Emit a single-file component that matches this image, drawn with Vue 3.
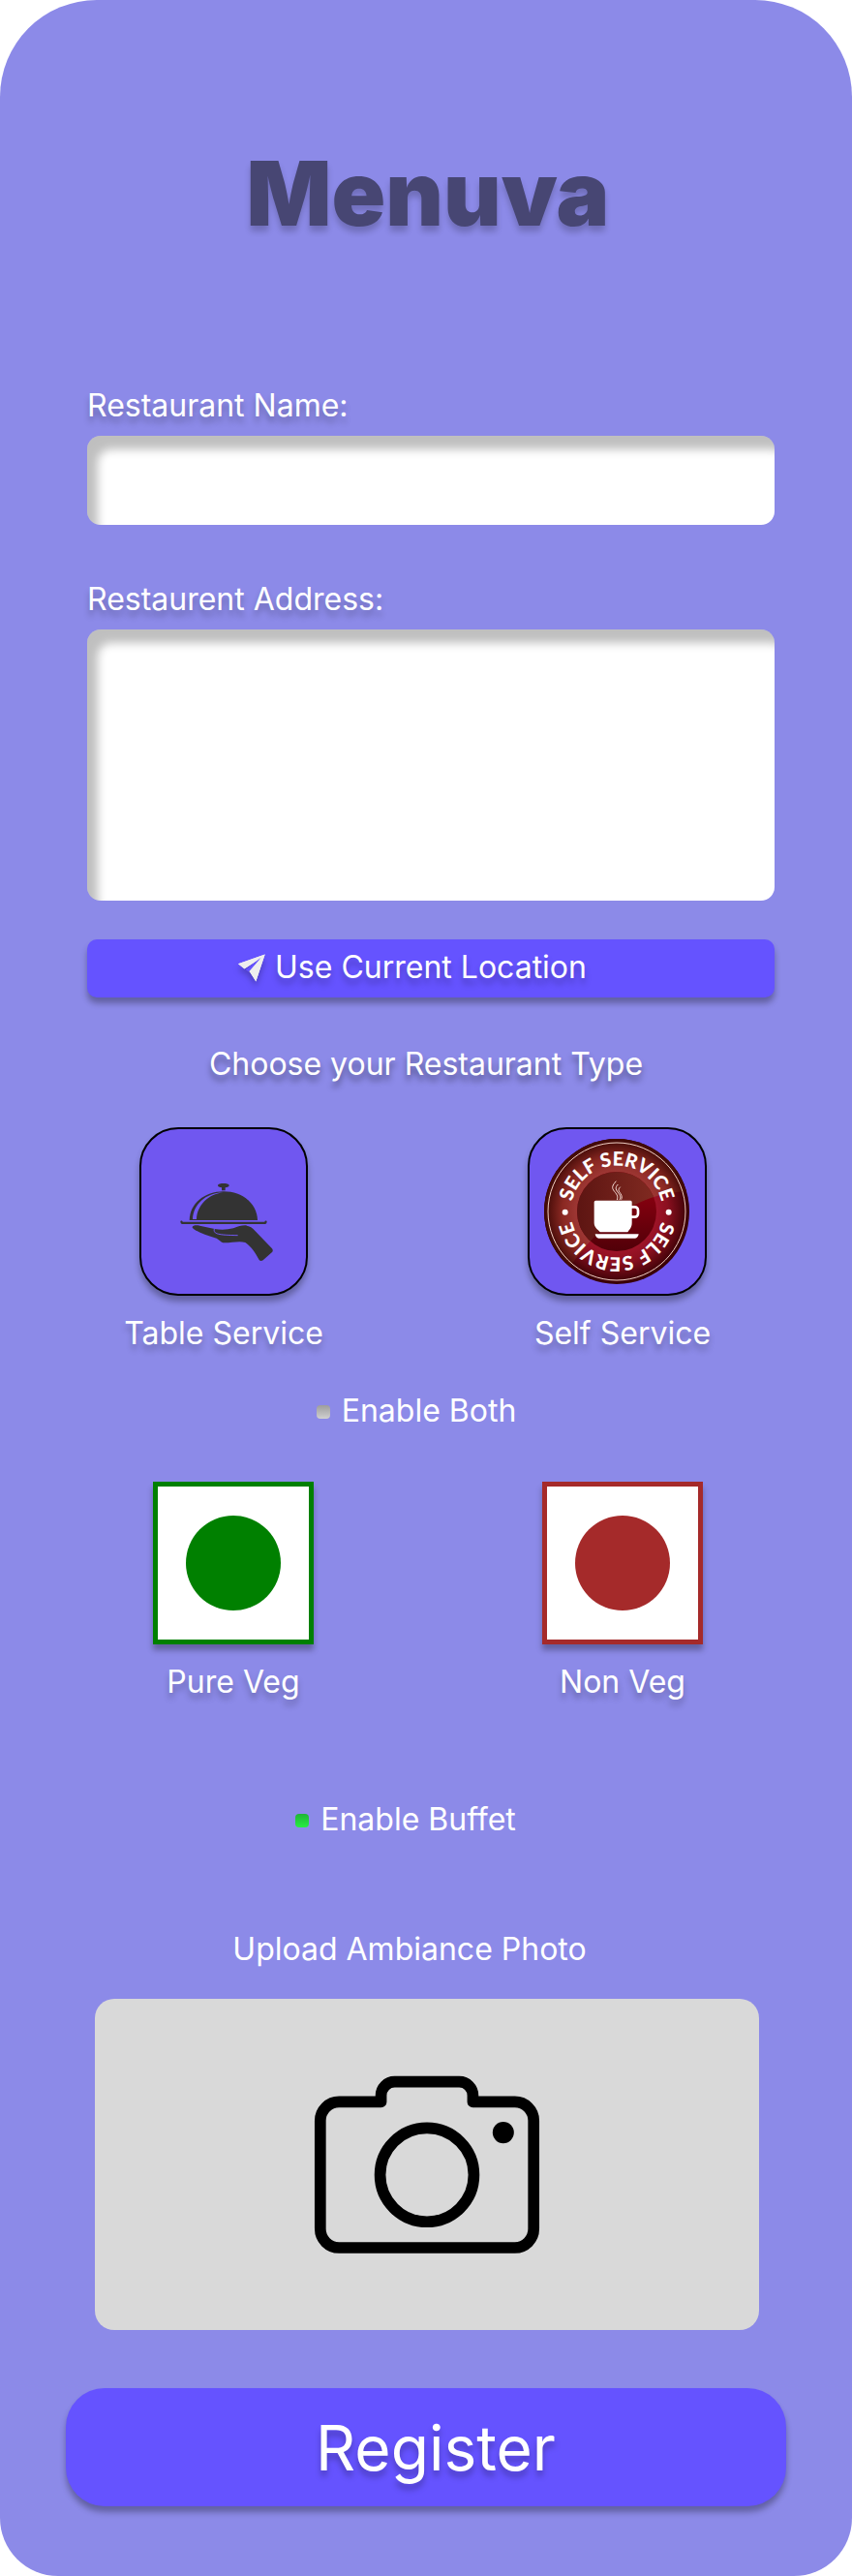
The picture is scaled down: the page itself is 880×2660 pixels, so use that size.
<script setup>
import { ref } from 'vue'

const restaurantName = ref('')
const address = ref('')
const serviceType = ref('')
const foodType = ref('')
const enableBoth = ref(false)
const enableBuffet = ref(true)
</script>

<template>
  <main class="panel">
    <h1 class="brand">Menuva</h1>

    <form class="form" @submit.prevent>
      <div class="field">
        <label class="text shade" for="name">Restaurant Name:</label>
        <input id="name" v-model="restaurantName" class="box" type="text" />
      </div>

      <div class="field">
        <label class="text shade" for="address">Restaurent Address:</label>
        <textarea id="address" v-model="address" class="box box-tall"></textarea>
      </div>

      <button class="locate text" type="button">
        <svg class="plane" viewBox="30 38 84 86" aria-hidden="true">
          <path d="M113 39 30 68 49 84 97 53 65 91 85 123Z" fill="#eee" />
          <path d="M50 83 99 51 62 91 66 94 85 123 113 39 30 68Z" fill="#eee" />
          <path d="M101 49 53 86 63 93Z" fill="#6553ff" />
        </svg>
        <span class="shade">Use Current Location</span>
      </button>

      <h2 class="text heading">Choose your Restaurant Type</h2>

      <div class="choices services">
        <button class="choice" type="button" :aria-pressed="serviceType === 'table'" @click="serviceType = 'table'">
          <span class="tile">
            <svg class="tray" viewBox="78 78 510 510" aria-hidden="true">
              <g fill="#333">
                <path d="M315 252c1-8 34-8 35 0 0 4-5 6-12 7v9h-11v-9c-7-1-12-3-12-7Z" />
                <path d="M227 360c1-51 46-89 106-89 59 0 104 38 105 89Z" />
                <path d="M199 364c0-3 6-3 7 1h254c1-4 7-4 7-1 0 5-2 8-6 8H205c-4 0-6-3-6-8Z" />
                <path d="M236 381c1-5 12-6 23-4l46 10c18 3 38 3 58-2 15-5 24-9 37-9 13 1 22 7 31 18l52 54c3 4 3 8 0 11l-28 25c-4 3-9 3-12-1-14-26-26-42-43-54-20-6-44 2-69 1-7-3-12-10-20-14-26-7-51-16-68-27-5-3-8-5-7-8Z" />
              </g>
              <path d="M237 357c2-45 39-81 94-83-45 6-80 39-82 83Z" fill="#7057f0" />
              <path d="M304 387c-4 16 13 19 73 20" fill="none" stroke="#7057f0" stroke-width="3" />
            </svg>
          </span>
          <span class="text shade">Table Service</span>
        </button>

        <button class="choice" type="button" :aria-pressed="serviceType === 'self'" @click="serviceType = 'self'">
          <span class="tile tile-wide">
            <svg class="badge" viewBox="0 0 450 450" aria-hidden="true">
              <defs>
                <radialGradient id="ring">
                  <stop offset="0.5" stop-color="#a3142a" />
                  <stop offset="0.7" stop-color="#8c1020" />
                  <stop offset="1" stop-color="#350004" />
                </radialGradient>
                <radialGradient id="ringGloss">
                  <stop offset="0.5" stop-color="#a23a38" />
                  <stop offset="0.75" stop-color="#8a2822" />
                  <stop offset="1" stop-color="#3c0805" />
                </radialGradient>
                <linearGradient id="disc" x1="0" y1="0" x2="0" y2="1">
                  <stop offset="0.3" stop-color="#86000f" />
                  <stop offset="1" stop-color="#510008" />
                </linearGradient>
                <linearGradient id="discGloss" x1="0" y1="0" x2="1" y2="0">
                  <stop offset="0" stop-color="#5d1512" />
                  <stop offset="1" stop-color="#812a21" />
                </linearGradient>
                <clipPath id="gloss">
                  <path d="M0 0H450V163C330 164 205 215 70 410L0 450Z" />
                </clipPath>
                <path id="orbit" d="M83 225A142 142 0 0 1 367 225A142 142 0 0 1 83 225" />
              </defs>
              <circle cx="225" cy="225" r="225" fill="url(#ring)" />
              <circle cx="225" cy="225" r="225" fill="url(#ringGloss)" clip-path="url(#gloss)" />
              <circle cx="225" cy="225" r="213" fill="none" stroke="#f0cfc4" stroke-width="3" />
              <circle cx="225" cy="225" r="123" fill="url(#disc)" />
              <circle cx="225" cy="225" r="123" fill="url(#discGloss)" clip-path="url(#gloss)" />
              <g class="orbit-text" fill="#fff" text-anchor="middle">
                <text><textPath href="#orbit" startOffset="25%">SELF SERVICE</textPath></text>
                <text><textPath href="#orbit" startOffset="75%">SELF SERVICE</textPath></text>
              </g>
              <g fill="#fff">
                <circle cx="65" cy="227" r="9" />
                <circle cx="386" cy="227" r="9" />
                <path d="M160 191H268Q272 191 272 196V260C272 276 263 281 259 289H173C169 281 155 276 155 260V196Q155 191 160 191Z" />
                <path d="M158 295H293Q291 307 282 308H169Q160 307 158 295Z" />
              </g>
              <rect x="262" y="211" width="29" height="31" rx="10" fill="none" stroke="#fff" stroke-width="8" />
              <path d="M223 131c-12 14-15 20-5 32s11 16 8 26M229 141c-12 12-5 18 2 28s6 15 2 20M236 149c-9 9-4 13 1 21s4 12 2 18" fill="none" stroke="#f5dcd5" stroke-width="3" />
            </svg>
          </span>
          <span class="text shade">Self Service</span>
        </button>
      </div>

      <label class="check check-both text">
        <input v-model="enableBoth" type="checkbox" />
        Enable Both
      </label>

      <div class="choices foods">
        <button class="choice" type="button" :aria-pressed="foodType === 'veg'" @click="foodType = 'veg'">
          <span class="mark veg"><span class="dot"></span></span>
          <span class="text shade">Pure Veg</span>
        </button>
        <button class="choice" type="button" :aria-pressed="foodType === 'nonveg'" @click="foodType = 'nonveg'">
          <span class="mark nonveg"><span class="dot"></span></span>
          <span class="text shade">Non Veg</span>
        </button>
      </div>

      <label class="check check-buffet text">
        <input v-model="enableBuffet" type="checkbox" />
        Enable Buffet
      </label>

      <label class="text upload-label" for="photo">Upload Ambiance Photo</label>
      <div class="upload">
        <svg class="camera" viewBox="40 38 700 554" aria-hidden="true">
          <g fill="none" stroke="#000" stroke-width="35" stroke-linejoin="round">
            <path d="M118 120H248V100A42 42 0 0 1 290 58H490A42 42 0 0 1 532 100V120H662A58 58 0 0 1 720 178V513A58 58 0 0 1 662 571H118A58 58 0 0 1 60 513V178A58 58 0 0 1 118 120Z" />
            <circle cx="390" cy="346" r="145" />
          </g>
          <circle cx="626" cy="215" r="33" />
        </svg>
        <input id="photo" class="file" type="file" accept="image/*" />
      </div>

      <button class="register" type="submit">Register</button>
    </form>
  </main>
</template>

<style>
body {
  margin: 0;
  background: #fff;
}
</style>

<style scoped>
.panel {
  box-sizing: border-box;
  padding: 144px 0 72px;
  border-radius: 100px 100px 60px 60px;
  background: #8c8ae8;
  font-family: Inter, "Liberation Sans", sans-serif;
  color: #fff;
}

.brand {
  margin: 0 0 142px;
  padding-left: 4px;
  text-align: center;
  font-size: 92px;
  line-height: 112px;
  font-weight: 900;
  color: #474673;
  text-shadow: 0 6px 6px rgba(0, 0, 0, 0.2);
}

.form {
  display: flex;
  flex-direction: column;
}

.text {
  font-size: 32px;
  line-height: 42px;
  font-weight: 400;
}

.shade {
  text-shadow: 0 6px 6px rgba(0, 0, 0, 0.25);
}

button {
  margin: 0;
  padding: 0;
  border: 0;
  background: none;
  color: inherit;
  font-family: inherit;
  cursor: pointer;
}

.field {
  display: flex;
  flex-direction: column;
  gap: 10px;
  margin: 0 80px 56px 90px;
}

.field + .locate {
  margin-top: -16px;
}

.box {
  box-sizing: border-box;
  width: 100%;
  height: 92px;
  padding: 20px 24px;
  border: 0;
  border-radius: 14px;
  background: #fff;
  box-shadow: inset 11px 14px 10px rgba(0, 0, 0, 0.25);
  font: 400 32px/42px Inter, sans-serif;
  color: #333;
}

.box-tall {
  height: 280px;
  resize: none;
}

.locate {
  display: flex;
  align-items: center;
  justify-content: center;
  gap: 10px;
  height: 60px;
  margin: 0 80px 0 90px;
  padding: 0 38px 2px 0;
  border-radius: 10px;
  background: #6553ff;
  box-shadow: 0 6px 6px rgba(0, 0, 0, 0.3);
}

.plane {
  width: 28px;
  height: 29px;
  filter: drop-shadow(0 5px 3px rgba(0, 0, 0, 0.25));
}

.heading {
  margin: 48px 0 44px;
  text-align: center;
  text-shadow: 0 6px 6px rgba(0, 0, 0, 0.4);
}

.choices {
  display: grid;
  grid-template-columns: 1fr 1fr;
}

.services {
  padding: 0 31px 0 25px;
}

.foods {
  padding: 0 36px 0 40px;
}

.choice {
  display: flex;
  flex-direction: column;
  align-items: center;
  gap: 18px;
  justify-self: center;
}

.tile {
  box-sizing: border-box;
  display: flex;
  align-items: center;
  justify-content: center;
  width: 174px;
  height: 174px;
  border: 2px solid #000;
  border-radius: 40px;
  background: #7057f0;
  box-shadow: 0 6px 6px rgba(0, 0, 0, 0.3);
}

.tile-wide {
  width: 185px;
  margin-right: 12px;
}

.tray {
  width: 170px;
  height: 170px;
}

.badge {
  width: 150px;
  height: 150px;
}

.orbit-text {
  font-family: Lato, sans-serif;
  font-size: 60px;
  font-weight: 900;
}

.check {
  display: flex;
  align-items: center;
  justify-content: center;
  gap: 12px;
}

.check input {
  appearance: none;
  width: 14px;
  height: 14px;
  margin: 2px 0 0;
  border-radius: 4px;
  background: linear-gradient(#9d9d9d, #d0d0d0);
}

.check input:checked {
  background: linear-gradient(#20b536, #27ee42);
}

.check-both {
  margin: 38px 0 52px;
  padding-right: 20px;
}

.check-buffet {
  margin: 100px 0 92px;
  padding-right: 42px;
}

.mark {
  box-sizing: border-box;
  display: flex;
  align-items: center;
  justify-content: center;
  width: 166px;
  height: 168px;
  border: 5px solid;
  background: #fff;
  box-shadow: 0 6px 6px rgba(0, 0, 0, 0.3);
}

.veg {
  border-color: #008000;
  color: #008000;
}

.nonveg {
  border-color: #a52a2a;
  color: #a52a2a;
}

.dot {
  width: 98px;
  height: 98px;
  border-radius: 50%;
  background: currentColor;
}

.upload-label {
  padding-right: 34px;
  text-align: center;
}

.upload {
  position: relative;
  display: flex;
  align-items: center;
  justify-content: center;
  height: 342px;
  margin: 30px 96px 60px 98px;
  border-radius: 20px;
  background: #d9d9d9;
}

.camera {
  width: 234px;
  height: 185px;
}

.file {
  position: absolute;
  inset: 0;
  width: 100%;
  height: 100%;
  opacity: 0;
  cursor: pointer;
}

.register {
  height: 122px;
  margin: 0 68px;
  padding-left: 20px;
  border-radius: 40px;
  background: #6553ff;
  box-shadow: 0 6px 6px rgba(0, 0, 0, 0.3);
  font-size: 64px;
  font-weight: 400;
  text-shadow: 0 6px 6px rgba(0, 0, 0, 0.25);
}
</style>
